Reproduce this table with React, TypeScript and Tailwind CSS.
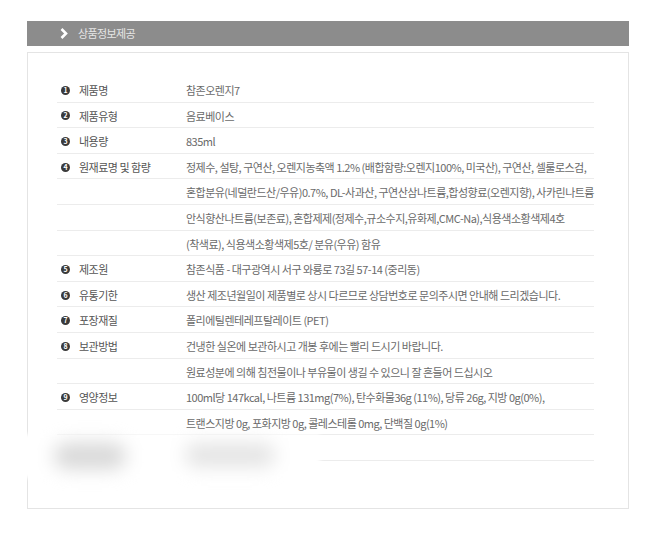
const rows: { no?: number; label?: string; value: string }[] = [
  { no: 1, label: '제품명', value: '참존오렌지7' },
  { no: 2, label: '제품유형', value: '음료베이스' },
  { no: 3, label: '내용량', value: '835ml' },
  { no: 4, label: '원재료명 및 함량', value: '정제수, 설탕, 구연산, 오렌지농축액 1.2% (배합함량:오렌지100%, 미국산), 구연산, 셀룰로스검,' },
  { value: '혼합분유(네덜란드산/우유)0.7%, DL-사과산, 구연산삼나트륨,합성향료(오렌지향), 사카린나트륨' },
  { value: '안식향산나트륨(보존료), 혼합제제(정제수,규소수지,유화제,CMC-Na),식용색소황색제4호' },
  { value: '(착색료), 식용색소황색제5호/ 분유(우유) 함유' },
  { no: 5, label: '제조원', value: '참존식품 - 대구광역시 서구 와룡로 73길 57-14 (중리동)' },
  { no: 6, label: '유통기한', value: '생산 제조년월일이 제품별로 상시 다르므로 상담번호로 문의주시면 안내해 드리겠습니다.' },
  { no: 7, label: '포장재질', value: '폴리에틸렌테레프탈레이트 (PET)' },
  { no: 8, label: '보관방법', value: '건냉한 실온에 보관하시고 개봉 후에는 빨리 드시기 바랍니다.' },
  { value: '원료성분에 의해 침전물이나 부유물이 생길 수 있으니 잘 흔들어 드십시오' },
  { no: 9, label: '영양정보', value: '100ml당 147kcal, 나트륨 131mg(7%), 탄수화물36g (11%), 당류 26g, 지방 0g(0%),' },
  { value: '트랜스지방 0g, 포화지방 0g, 콜레스테롤 0mg, 단백질 0g(1%)' },
  { value: '' },
];

export default function App() {
  return (
    <div className="min-h-[533px] w-[653px] bg-white pt-[21px] font-['Noto_Sans_CJK_KR','Noto_Sans',sans-serif]">
      {/* Title bar */}
      <div className="ml-[27px] flex h-[25px] w-[602px] items-center bg-[#8c8c8c]">
        <svg className="ml-[33px]" width="8" height="11" viewBox="0 0 8 11">
          <polyline points="1.5,1 6,5.5 1.5,10" fill="none" stroke="#ffffff" strokeWidth="2.6" />
        </svg>
        <span className="ml-[10px] text-[11px] tracking-[-0.6px] text-[#e6e6e6]">상품정보제공</span>
      </div>

      {/* Info panel */}
      <div className="relative ml-[27px] mt-[6px] w-[602px] border border-[#e4e4e4] pb-[47px] pl-[29px] pr-[34px] pt-[24px]">
        {rows.map((row, i) => (
          <div
            key={i}
            className="flex h-[25.6px] items-center border-b border-[#ececec] pt-[2px] text-[11px] tracking-[-0.5px] whitespace-nowrap"
          >
            <div className="flex w-[129px] items-center text-[#555]">
              {row.no && (
                <span className="ml-[4px] flex h-[9px] w-[9px] items-center justify-center rounded-full bg-[#3a3a3a] text-[7px] leading-none font-bold tracking-normal text-white">
                  {row.no}
                </span>
              )}
              {row.label && <span className="ml-[9px]">{row.label}</span>}
            </div>
            <div className="text-[#6a6a6a]">{row.value}</div>
          </div>
        ))}

        {/* blurred-out row */}
        <div className="absolute left-[-8px] top-[381px] h-[44px] w-[300px] bg-white blur-[2px]">
          <div className="absolute left-[34px] top-[9px] h-[26px] w-[72px] rounded-full bg-[#d8d8d8] blur-[9px]" />
          <div className="absolute left-[165px] top-[9px] h-[24px] w-[90px] rounded-full bg-[#e4e4e4] blur-[9px]" />
        </div>
      </div>
    </div>
  );
}
